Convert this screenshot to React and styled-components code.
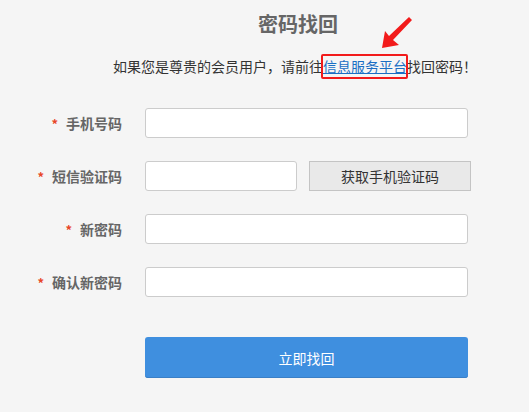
import React from 'react';
import styled, { createGlobalStyle } from 'styled-components';

const GlobalStyle = createGlobalStyle`
  body {
    margin: 0;
    background: #f5f5f5;
    font-family: "Noto Sans CJK SC", "Noto Sans", sans-serif;
  }
`;

const Page = styled.div`
  position: relative;
  width: 529px;
  height: 412px;
  padding-top: 10px;
  box-sizing: border-box;
  background: #f5f5f5;
`;

const Title = styled.h2`
  margin: 0 0 0 258px;
  font-size: 20px;
  line-height: 28px;
  font-weight: bold;
  color: #666;
`;

const Notice = styled.p`
  margin: 18px 0 0 113px;
  font-size: 14px;
  line-height: 20px;
  color: #333;
  white-space: nowrap;
`;

const PlatformLink = styled.a`
  position: relative;
  color: #1a6fc4;
  text-decoration: underline;

  &::after {
    content: '';
    position: absolute;
    left: -2px;
    right: -1px;
    top: -2px;
    bottom: -3px;
    border: 2px solid #f21b1b;
    border-radius: 2px;
  }
`;

const Arrow = styled.svg`
  position: absolute;
  left: 378px;
  top: 12px;
`;

const Form = styled.form`
  margin-top: 32px;
  display: flex;
  flex-direction: column;
  gap: 23px;
`;

const Row = styled.div`
  display: flex;
  align-items: center;
  height: 30px;
`;

const Label = styled.label`
  width: 122px;
  text-align: right;
  font-size: 14px;
  font-weight: bold;
  color: #666;
  margin-right: 23px;
  white-space: nowrap;
`;

const Star = styled.span`
  color: #e8462a;
  font-size: 13px;
  margin-right: 8px;
`;

const Input = styled.input`
  box-sizing: border-box;
  width: ${(p) => p.$w || 323}px;
  height: 30px;
  border: 1px solid #ccc;
  border-radius: 3px;
  background: #fff;
  outline: none;
  padding: 0 8px;
`;

const CodeButton = styled.button`
  box-sizing: border-box;
  width: 162px;
  height: 30px;
  margin-left: 12px;
  border: 1px solid #c4c4c4;
  background: #e9e9e9;
  color: #333;
  font-family: inherit;
  font-size: 14px;
  cursor: pointer;
`;

const Submit = styled.button`
  box-sizing: border-box;
  width: 323px;
  height: 41px;
  margin: 40px 0 0 145px;
  display: block;
  border: none;
  border-radius: 3px;
  background: #3f8fdf;
  box-shadow: inset 0 -1px 0 #3a7fc6;
  color: #fff;
  font-family: inherit;
  font-size: 14px;
  cursor: pointer;
`;

const fields = [
  { label: '手机号码' },
  { label: '短信验证码', code: true },
  { label: '新密码', type: 'password' },
  { label: '确认新密码', type: 'password' },
];

export default function App() {
  return (
    <Page>
      <GlobalStyle />
      <Title>密码找回</Title>
      <Notice>
        如果您是尊贵的会员用户，请前往<PlatformLink href="#">信息服务平台</PlatformLink>找回密码！
      </Notice>
      <Arrow width="40" height="40" viewBox="0 0 40 40">
        <polygon points="4,36 7,19 11,24 31,5 34,8 15,28 21,33" fill="#f21b1b" />
      </Arrow>
      <Form onSubmit={(e) => e.preventDefault()}>
        {fields.map((f) => (
          <Row key={f.label}>
            <Label>
              <Star>*</Star>
              {f.label}
            </Label>
            {f.code ? (
              <>
                <Input $w={152} />
                <CodeButton type="button">获取手机验证码</CodeButton>
              </>
            ) : (
              <Input type={f.type || 'text'} />
            )}
          </Row>
        ))}
      </Form>
      <Submit type="button">立即找回</Submit>
    </Page>
  );
}
